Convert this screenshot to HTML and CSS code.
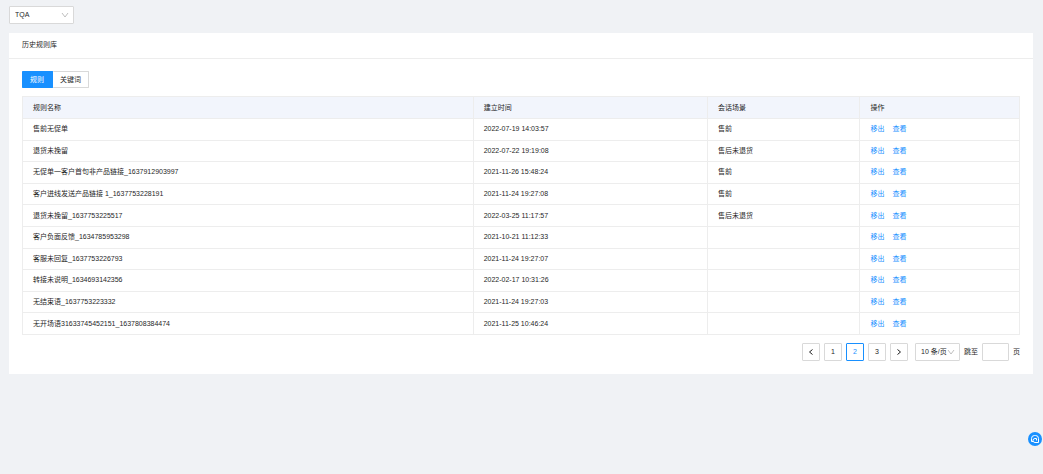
FILE: index.html
```html
<!DOCTYPE html>
<html lang="zh-CN">
<head>
<meta charset="utf-8">
<title>历史规则库</title>
<link rel="stylesheet" href="styles.css">
</head>
<body>
<header class="toolbar">
  <div class="select select-project">
    <select aria-label="项目"><option>TQA</option></select>
    <svg class="chevron" viewBox="0 0 8 8"><path d="M1 2l3 4 3-4"/></svg>
  </div>
</header>
<main class="card">
  <h1 class="card-title">历史规则库</h1>
  <div class="card-body">
    <div class="tabs">
      <button class="tab tab-active" type="button">规则</button><button class="tab" type="button">关键词</button>
    </div>
    <table class="rules">
      <thead>
        <tr><th class="col-name">规则名称</th><th class="col-time">建立时间</th><th class="col-scene">会话场景</th><th class="col-action">操作</th></tr>
      </thead>
      <tbody>
        <tr><td>售前无促单</td><td>2022-07-19 14:03:57</td><td>售前</td><td><a href="#">移出</a><a href="#">查看</a></td></tr>
        <tr><td>退货未挽留</td><td>2022-07-22 19:19:08</td><td>售后未退货</td><td><a href="#">移出</a><a href="#">查看</a></td></tr>
        <tr><td>无促单一客户首句非产品链接_1637912903997</td><td>2021-11-26 15:48:24</td><td>售前</td><td><a href="#">移出</a><a href="#">查看</a></td></tr>
        <tr><td>客户进线发送产品链接 1_1637753228191</td><td>2021-11-24 19:27:08</td><td>售前</td><td><a href="#">移出</a><a href="#">查看</a></td></tr>
        <tr><td>退货未挽留_1637753225517</td><td>2022-03-25 11:17:57</td><td>售后未退货</td><td><a href="#">移出</a><a href="#">查看</a></td></tr>
        <tr><td>客户负面反馈_1634785953298</td><td>2021-10-21 11:12:33</td><td></td><td><a href="#">移出</a><a href="#">查看</a></td></tr>
        <tr><td>客服未回复_1637753226793</td><td>2021-11-24 19:27:07</td><td></td><td><a href="#">移出</a><a href="#">查看</a></td></tr>
        <tr><td>转接未说明_1634693142356</td><td>2022-02-17 10:31:26</td><td></td><td><a href="#">移出</a><a href="#">查看</a></td></tr>
        <tr><td>无结束语_1637753223332</td><td>2021-11-24 19:27:03</td><td></td><td><a href="#">移出</a><a href="#">查看</a></td></tr>
        <tr><td>无开场语31633745452151_1637808384474</td><td>2021-11-25 10:46:24</td><td></td><td><a href="#">移出</a><a href="#">查看</a></td></tr>
      </tbody>
    </table>
    <nav class="pager" aria-label="分页">
      <button class="page" type="button" aria-label="上一页"><svg viewBox="0 0 8 8"><path d="M5.500 1.500L2.500 4l3 2.500"/></svg></button>
      <button class="page" type="button">1</button>
      <button class="page page-current" type="button" aria-current="page">2</button>
      <button class="page" type="button">3</button>
      <button class="page" type="button" aria-label="下一页"><svg viewBox="0 0 8 8"><path d="M2.500 1.500L5.500 4l-3 2.500"/></svg></button>
      <div class="select select-size">
        <select aria-label="每页条数"><option>10 条/页</option></select>
        <svg class="chevron" viewBox="0 0 8 8"><path d="M1 2l3 4 3-4"/></svg>
      </div>
      <label class="jump" for="jump">跳至</label>
      <input class="jump-input" id="jump" type="text">
      <span>页</span>
    </nav>
  </div>
</main>
<button class="chat" type="button" aria-label="在线客服">
  <svg viewBox="0 0 14 14"><path d="M5 9.500H3.500V6.500a3 3 0 0 1 3-3h1a3 3 0 0 1 3 3v4H7a2 2 0 0 1 0-4h1.500v2"/></svg>
</button>
</body>
</html>
```
FILE: styles.css
```css
* {
  box-sizing: border-box;
}

body {
  margin: 0;
  padding: 6px 10px 6px 9px;
  background: #f0f2f5;
  color: #1f1f1f;
  font: 7px/12px "Liberation Sans", "Noto Sans CJK SC", sans-serif;
}

button,
input,
select {
  margin: 0;
  padding: 0;
  border: 1px solid #d9d9d9;
  border-radius: 1px;
  background: #fff;
  color: inherit;
  font: inherit;
}

svg {
  fill: none;
  stroke: currentColor;
}

.toolbar {
  display: flex;
  margin-bottom: 9px;
}

.select {
  display: grid;
  align-items: center;
}

.select select {
  grid-area: 1 / 1;
  width: 100%;
  height: 18px;
  padding: 0 5px;
  appearance: none;
}

.chevron {
  grid-area: 1 / 1;
  justify-self: end;
  width: 8px;
  height: 8px;
  margin-right: 5px;
  color: #bfbfbf;
  pointer-events: none;
}

.select-project {
  width: 65px;
}

.card {
  background: #fff;
}

.card-title {
  margin: 0;
  padding: 6px 13px 7px;
  border-bottom: 1px solid #ededed;
  font-size: 7px;
  font-weight: 400;
}

.card-body {
  padding: 12px 13px 13px;
}

.tabs {
  display: flex;
  margin-bottom: 8px;
}

.tab {
  height: 17px;
  padding: 0 7px;
  border-left: 0;
}

.tab-active {
  padding: 0 8px;
  border-color: #1890ff;
  background: #1890ff;
  color: #fff;
}

.rules {
  width: 100%;
  height: 239px;
  table-layout: fixed;
  border-collapse: collapse;
}

.rules th,
.rules td {
  padding: 0 10px;
  border: 1px solid #ededed;
  font-weight: 400;
  text-align: left;
}

.rules th {
  height: 22px;
  background: #f2f5fc;
}

.col-name {
  width: 45.2%;
}

.col-time {
  width: 23.5%;
}

.col-scene {
  width: 15.3%;
}

.col-action {
  width: 16%;
}

.rules a {
  margin-right: 8px;
  color: #1890ff;
  text-decoration: none;
}

.pager {
  display: flex;
  justify-content: flex-end;
  align-items: center;
  gap: 4px;
  margin-top: 8px;
}

.page {
  display: grid;
  place-items: center;
  width: 18px;
  height: 18px;
}

.page svg {
  width: 8px;
  height: 8px;
}

.page-current {
  border-color: #1890ff;
  color: #1890ff;
}

.select-size {
  width: 45px;
  margin-left: 3px;
}

.jump-input {
  width: 27px;
  height: 18px;
}

.chat {
  position: fixed;
  right: 1px;
  bottom: 28px;
  width: 14px;
  height: 14px;
  border: 0;
  border-radius: 50%;
  background: #1890ff;
  color: #fff;
}

.chat svg {
  display: block;
  width: 14px;
  height: 14px;
}
```
